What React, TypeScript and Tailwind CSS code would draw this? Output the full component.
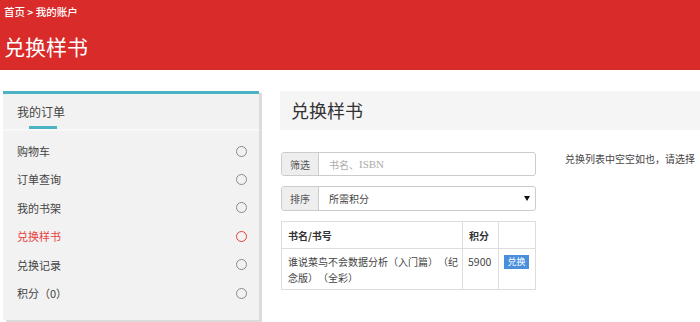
import React from "react";

const items = ["购物车", "订单查询", "我的书架", "兑换样书", "兑换记录", "积分（0）"];

export default function App() {
  return (
    <div
      className="w-[700px] h-[322px] overflow-hidden bg-white text-[#333] [text-spacing-trim:space-all]"
      style={{ fontFamily: '"Noto Sans CJK SC", "Noto Sans", sans-serif' }}
    >
      <div className="h-[70px] bg-[#d92b29] px-[4px] text-white">
        <div className="pt-[4px] text-[10.5px] leading-[16px] font-medium">首页 &gt; 我的账户</div>
        <div className="mt-[13px] text-[21px] leading-[26px]">兑换样书</div>
      </div>
      <div className="flex pt-[21px]">
        <div className="ml-[3px] w-[256px] h-[229px] border-t-[3px] border-[#4cb3c5] bg-[#f2f2f2] shadow-[3px_2px_0_#dcdcdc]">
          <div className="h-[37px] border-b-[2px] border-[#f8f8f8] relative">
            <div className="pl-[14px] pt-[10px] text-[12px] leading-[16px] text-[#444]">我的订单</div>
            <div className="absolute left-[26px] bottom-[0px] w-[28px] h-[3px] bg-[#4cb3c5]" />
          </div>
          <div className="pt-[6px]">
            {items.map((t, i) => (
              <div key={t} className="h-[28.4px] flex items-center justify-between pl-[14px] pr-[12px]">
                <span className={`text-[11px] ${i === 3 ? "text-[#e8403d]" : "text-[#444]"}`}>{t}</span>
                <span
                  className={`w-[11px] h-[11px] rounded-full border-[1.5px] ${i === 3 ? "border-[#e8403d]" : "border-[#8a8a8a]"}`}
                />
              </div>
            ))}
          </div>
        </div>
        <div className="ml-[21px] flex-1">
          <div className="h-[39px] bg-[#f5f5f5] flex items-center pl-[11px] text-[18px] text-[#333]">兑换样书</div>
          <div className="flex pt-[22px] pl-[1px]">
            <div className="w-[255px]">
              <div className="flex h-[24px] rounded-[3px] border border-[#cccccc] text-[10px] overflow-hidden">
                <div className="w-[37px] bg-[#eeeeee] border-r border-[#cccccc] flex items-center justify-center text-[#555]">筛选</div>
                <div className="flex items-center pl-[10px] text-[#aaa]">
                  书名、<span style={{ fontFamily: '"Liberation Serif", serif' }} className="text-[11px]">ISBN</span>
                </div>
              </div>
              <div className="mt-[10px] flex h-[25px] rounded-[3px] border border-[#cccccc] text-[10px] overflow-hidden">
                <div className="w-[37px] bg-[#eeeeee] border-r border-[#cccccc] flex items-center justify-center text-[#555]">排序</div>
                <div className="flex-1 flex items-center justify-between pl-[10px] pr-[5px] text-[#444]">
                  <span>所需积分</span>
                  <svg width="6" height="5" viewBox="0 0 6 5">
                    <path d="M0 0H6L3 5Z" fill="#111" />
                  </svg>
                </div>
              </div>
              <div className="mt-[10px] border border-[#dddddd] text-[10px]">
                <div className="flex h-[27px] border-b border-[#dddddd] font-bold text-[#333]">
                  <div className="w-[181px] border-r border-[#dddddd] flex items-center pl-[6px]">书名/书号</div>
                  <div className="w-[36px] border-r border-[#dddddd] flex items-center pl-[6px]">积分</div>
                  <div className="flex-1" />
                </div>
                <div className="flex h-[40px] text-[#444]">
                  <div className="w-[181px] border-r border-[#dddddd] pl-[6px] pr-[1px] pt-[5px] leading-[16px]">
                    谁说菜鸟不会数据分析（入门篇）（纪念版）（全彩）
                  </div>
                  <div className="w-[36px] border-r border-[#dddddd] pl-[5px] pt-[5px] leading-[16px] text-[10.5px]">5900</div>
                  <div className="flex-1 pt-[6px] pl-[5px]">
                    <div className="w-[25px] h-[14px] bg-[#4a8fdc] text-white text-[9px] flex items-center justify-center">兑换</div>
                  </div>
                </div>
              </div>
            </div>
            <div className="ml-[29px] text-[10px] leading-[14px] text-[#444] whitespace-nowrap">兑换列表中空空如也，请选择</div>
          </div>
        </div>
      </div>
    </div>
  );
}
